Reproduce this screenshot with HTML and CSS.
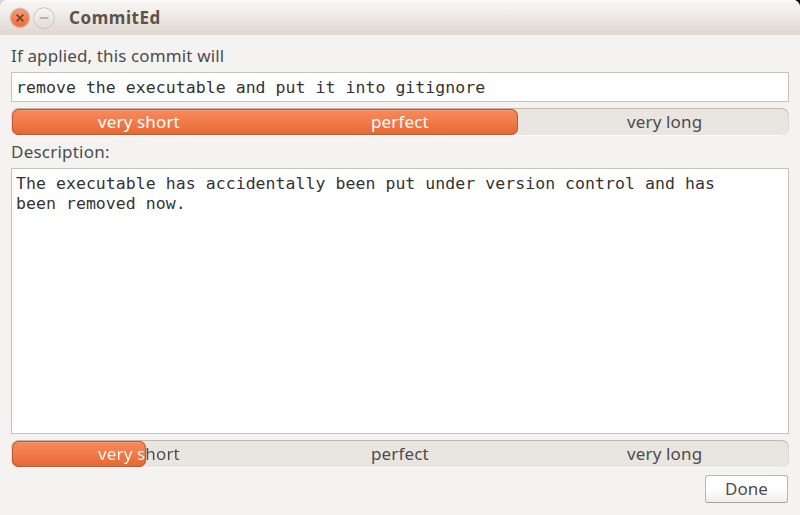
FILE: index.html
```html
<!DOCTYPE html>
<html lang="en">
<head>
<meta charset="utf-8">
<title>CommitEd</title>
<link rel="stylesheet" href="styles.css">
</head>
<body>
<div class="window">
  <header class="titlebar">
    <svg class="controls" width="50" height="28" viewBox="0 0 50 28" aria-hidden="true">
      <defs>
        <linearGradient id="close" x1="0" y1="0" x2="0" y2="1"><stop offset="0" stop-color="#f99a78"/><stop offset="1" stop-color="#ee6b3b"/></linearGradient>
        <linearGradient id="min" x1="0" y1="0" x2="0" y2="1"><stop offset="0" stop-color="#f8f7f5"/><stop offset="1" stop-color="#dfdad5"/></linearGradient>
      </defs>
      <circle cx="14" cy="14" r="10.5" fill="#d3cbc4"/>
      <circle cx="14" cy="14" r="9" fill="url(#close)" stroke="#e98765" stroke-width=".7"/>
      <path d="M10.6 10.6l6.8 6.8M17.4 10.6l-6.8 6.8" stroke="#7b4029" stroke-width="1.6"/>
      <circle cx="38" cy="14" r="10.2" fill="url(#min)" stroke="#c4bdb6" stroke-width="1"/>
      <circle cx="38" cy="14" r="9.2" fill="none" stroke="#f7f5f3" stroke-width=".7"/>
      <path d="M33.5 14h9" stroke="#a8a29b" stroke-width="1.5"/>
    </svg>
    <h1 class="title">CommitEd</h1>
  </header>
  <main class="content">
    <label class="label label-subject">If applied, this commit will</label>
    <div class="field subject">remove the executable and put it into gitignore</div>
    <div class="meter">
      <div class="fill fill-subject"></div>
      <div class="scale"><span class="mark covered">very short</span><span class="mark covered">perfect</span><span class="mark">very long</span></div>
    </div>
    <label class="label label-description">Description:</label>
    <div class="field description">The executable has accidentally been put under version control and has<br>been removed now.</div>
    <div class="meter">
      <div class="fill fill-description"></div>
      <div class="scale"><span class="mark partly-covered">very short</span><span class="mark">perfect</span><span class="mark">very long</span></div>
    </div>
    <button class="done" type="button">Done</button>
  </main>
</div>
</body>
</html>
```
FILE: styles.css
```css
* { box-sizing: border-box; }

body {
  margin: 0;
  background: linear-gradient(90deg, #d5d5d5 50%, #000 50%);
  font-family: "Noto Sans", sans-serif;
  font-size: 17px;
  color: #4c4c4c;
}

.window {
  height: 515px;
  display: flex;
  flex-direction: column;
  background: #f5f3f2;
  border-radius: 7px 7px 0 0;
  overflow: hidden;
}

.titlebar {
  height: 35px;
  flex: none;
  display: flex;
  align-items: center;
  padding-left: 6px;
  background: linear-gradient(#f8f7f5, #f1eeea 35%, #dfd6cf);
  box-shadow: inset 0 1px #fdfcfb;
}

.controls { flex: none; }

.title {
  margin: 1px 0 0 13px;
  font-size: 17px;
  line-height: 24px;
  font-weight: 700;
  color: #5b534a;
  letter-spacing: .55px;
  white-space: nowrap;
}

.content {
  flex: 1;
  display: flex;
  flex-direction: column;
  padding: 9px 11px 12px;
}

.label {
  height: 24px;
  line-height: 24px;
  white-space: nowrap;
}

.label-subject { margin-bottom: 4px; letter-spacing: .13px; }
.label-description { margin: 4px 0; letter-spacing: .22px; }

.field {
  background: #fff;
  border: 1px solid #cbc3b9;
  padding: 5px 4px;
  color: #333;
  font-family: "DejaVu Sans Mono", monospace;
  font-size: 16.5px;
  letter-spacing: .05px;
  line-height: 20px;
  white-space: nowrap;
}

.subject { height: 30px; margin-bottom: 6px; }
.description { height: 266px; margin-bottom: 6px; }

.meter {
  position: relative;
  height: 28px;
  flex: none;
  background: #e9e6e2;
  border-radius: 8px;
  box-shadow: inset 0 1px #c3b9ab, inset 1px 0 #dfdad3, inset -1px 0 #dfdad3, inset 0 -1px #fff;
}

.scale {
  position: relative;
  height: 28px;
  display: grid;
  grid-template-columns: 273px 256px auto;
  justify-items: start;
  padding-left: 87px;
  line-height: 28px;
  letter-spacing: .14px;
  white-space: nowrap;
}

.covered { color: #fff; }

/* The bar ends 49px into this label, so its colour changes there. */
.partly-covered {
  background: linear-gradient(90deg, #fff 48px, #4c4c4c 48px);
  -webkit-background-clip: text;
  background-clip: text;
  color: transparent;
}

.fill {
  position: absolute;
  top: 1px;
  left: 1px;
  height: 26px;
  border-radius: 7px;
  background: linear-gradient(#fa8a5f, #f27c4c 45%, #e66633);
  box-shadow: inset 0 0 0 1px #bd5a36, inset 0 2px #fb9772;
}

.fill-subject { width: 506px; }
.fill-description { width: 134px; }

.done {
  align-self: flex-end;
  width: 83px;
  height: 28px;
  flex: none;
  margin: 7px 1px 0 0;
  padding: 0;
  border: 1px solid #bcb6ae;
  border-bottom-color: #a9a39b;
  border-radius: 3px;
  background: linear-gradient(#fff 45%, #f1eeed);
  color: #4c4c4c;
  font: inherit;
  line-height: 26px;
}
```
